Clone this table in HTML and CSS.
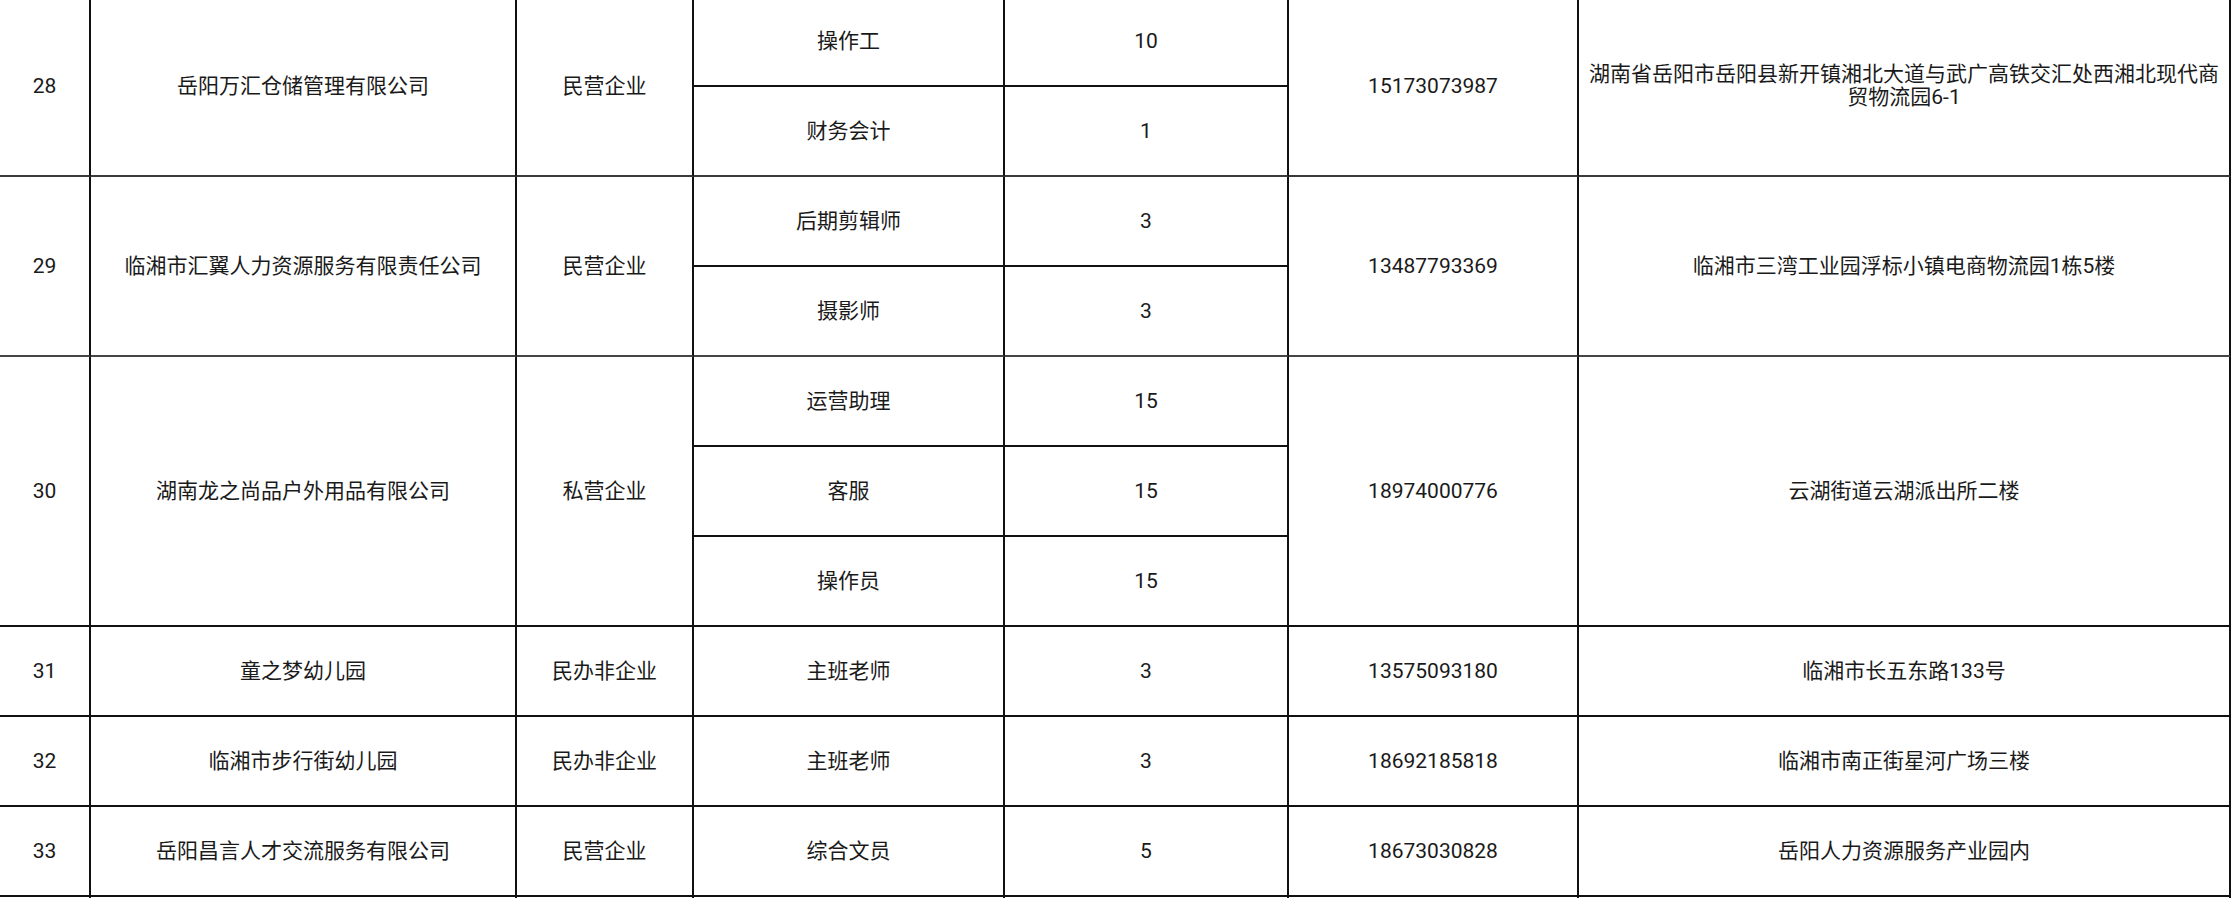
FILE: index.html
```html
<!DOCTYPE html>
<html lang="zh-CN">
<head>
<meta charset="utf-8">
<title>招聘信息表</title>
<link rel="stylesheet" href="styles.css">
</head>
<body>
<div class="sheet">
  <div class="cell span2 major-dark">28</div>
  <div class="cell span2 major-dark">岳阳万汇仓储管理有限公司</div>
  <div class="cell span2 major-dark">民营企业</div>
  <div class="cell">操作工</div>
  <div class="cell">10</div>
  <div class="cell span2 major-dark">15173073987</div>
  <div class="cell span2 major-dark addr">湖南省岳阳市岳阳县新开镇湘北大道与武广高铁交汇处西湘北现代商贸物流园6-1</div>
  <div class="cell major-dark">财务会计</div>
  <div class="cell major-dark">1</div>

  <div class="cell span2 major-grey">29</div>
  <div class="cell span2 major-grey">临湘市汇翼人力资源服务有限责任公司</div>
  <div class="cell span2 major-grey">民营企业</div>
  <div class="cell">后期剪辑师</div>
  <div class="cell">3</div>
  <div class="cell span2 major-grey">13487793369</div>
  <div class="cell span2 major-grey">临湘市三湾工业园浮标小镇电商物流园1栋5楼</div>
  <div class="cell major-grey">摄影师</div>
  <div class="cell major-grey">3</div>

  <div class="cell span3">30</div>
  <div class="cell span3">湖南龙之尚品户外用品有限公司</div>
  <div class="cell span3">私营企业</div>
  <div class="cell">运营助理</div>
  <div class="cell">15</div>
  <div class="cell span3">18974000776</div>
  <div class="cell span3">云湖街道云湖派出所二楼</div>
  <div class="cell">客服</div>
  <div class="cell">15</div>
  <div class="cell">操作员</div>
  <div class="cell">15</div>

  <div class="cell">31</div>
  <div class="cell">童之梦幼儿园</div>
  <div class="cell">民办非企业</div>
  <div class="cell">主班老师</div>
  <div class="cell">3</div>
  <div class="cell">13575093180</div>
  <div class="cell">临湘市长五东路133号</div>

  <div class="cell">32</div>
  <div class="cell">临湘市步行街幼儿园</div>
  <div class="cell">民办非企业</div>
  <div class="cell">主班老师</div>
  <div class="cell">3</div>
  <div class="cell">18692185818</div>
  <div class="cell">临湘市南正街星河广场三楼</div>

  <div class="cell">33</div>
  <div class="cell">岳阳昌言人才交流服务有限公司</div>
  <div class="cell">民营企业</div>
  <div class="cell">综合文员</div>
  <div class="cell">5</div>
  <div class="cell">18673030828</div>
  <div class="cell">岳阳人力资源服务产业园内</div>

  <div class="cell tail"></div>
  <div class="cell tail"></div>
  <div class="cell tail"></div>
  <div class="cell tail"></div>
  <div class="cell tail"></div>
  <div class="cell tail"></div>
  <div class="cell tail"></div>
</div>
</body>
</html>
```

FILE: styles.css
```css
html, body {
  margin: 0;
  padding: 0;
  background: #ffffff;
  overflow: hidden;
}

body {
  width: 2237px;
  height: 898px;
  font-family: Roboto, "Noto Sans CJK SC", sans-serif;
  font-size: 21px;
  color: #1a1a1a;
}

.sheet {
  display: grid;
  grid-template-columns: 91px 426px 177px 311px 284px 290px 652px;
  grid-template-rows: repeat(10, 90px) 1px;
  margin-top: -3px;
  width: 2231px;
}

.cell {
  box-sizing: border-box;
  border-right: 2px solid #111111;
  border-bottom: 2px solid #111111;
  display: flex;
  align-items: center;
  justify-content: center;
  text-align: center;
  line-height: 23px;
  padding: 0 8px;
  white-space: normal;
}

.span2 {
  grid-row: span 2;
}

.span3 {
  grid-row: span 3;
}

.major-grey {
  border-bottom-color: #454545;
}

.major-dark {
  border-bottom-color: #3a3a3a;
}

.addr {
  padding: 0 8px;
}

.tail {
  border-bottom: none;
}
```
